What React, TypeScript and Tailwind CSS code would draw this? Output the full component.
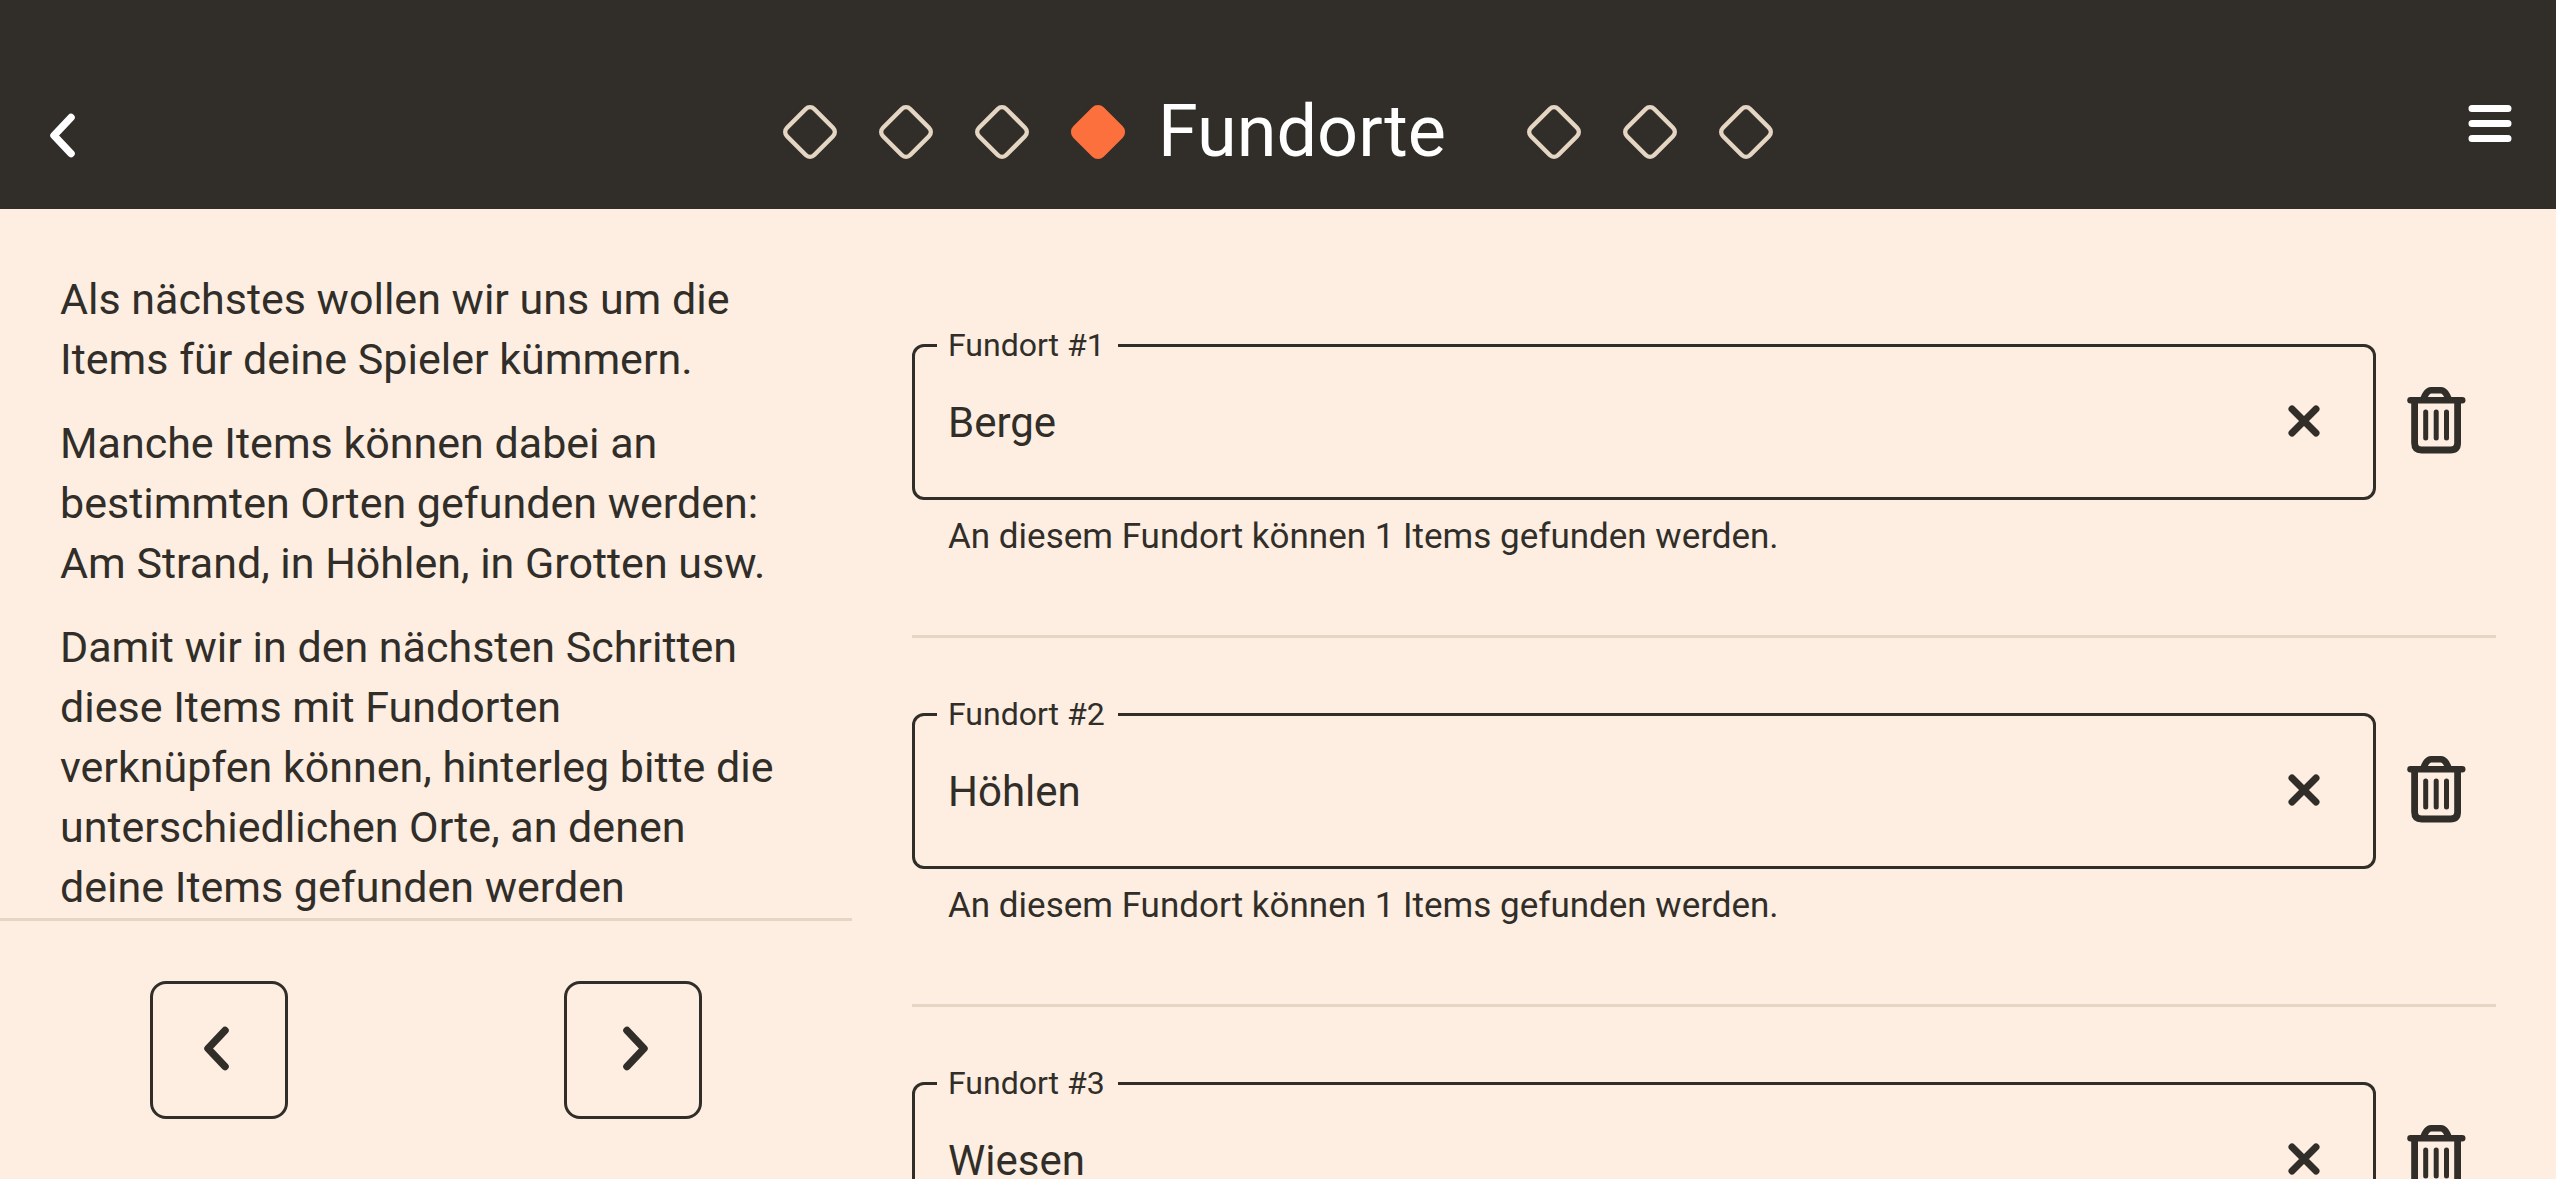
import React, { useState } from "react";

const STEPS_BEFORE = ["Schritt 1", "Schritt 2", "Schritt 3"];
const STEPS_AFTER = ["Schritt 5", "Schritt 6", "Schritt 7"];

const PARAGRAPHS = [
  "Als nächstes wollen wir uns um die Items für deine Spieler kümmern.",
  "Manche Items können dabei an bestimmten Orten gefunden werden: Am Strand, in Höhlen, in Grotten usw.",
  "Damit wir in den nächsten Schritten diese Items mit Fundorten verknüpfen können, hinterleg bitte die unterschiedlichen Orte, an denen deine Items gefunden werden",
];

function Diamond({ active = false }: { active?: boolean }) {
  return (
    <svg viewBox="0 0 60 60" className="size-[60px]" aria-hidden="true">
      {active ? (
        <rect x="8.5" y="8.5" width="43" height="43" rx="8" transform="rotate(45 30 30)" fill="#fc703e" />
      ) : (
        <rect
          x="10.75"
          y="10.75"
          width="38.5"
          height="38.5"
          rx="6"
          transform="rotate(45 30 30)"
          fill="none"
          stroke="#e5d5c3"
          strokeWidth="4.5"
        />
      )}
    </svg>
  );
}

function Step({ label, active }: { label: string; active?: boolean }) {
  return (
    <button type="button" aria-label={label} className="flex h-24 w-24 items-center justify-center">
      <Diamond active={active} />
    </button>
  );
}

function ChevronLeft() {
  return (
    <svg viewBox="0 0 72 72" className="size-[72px]" fill="none" stroke="currentColor" strokeWidth="7.5" strokeLinecap="round" strokeLinejoin="round" aria-hidden="true">
      <path d="M42 16.5 L25 34.5 L42 52.5" />
    </svg>
  );
}

function ChevronRight() {
  return (
    <svg viewBox="0 0 72 72" className="size-[72px]" fill="none" stroke="currentColor" strokeWidth="7.5" strokeLinecap="round" strokeLinejoin="round" aria-hidden="true">
      <path d="M30 16.5 L47 34.5 L30 52.5" />
    </svg>
  );
}

function MenuIcon() {
  return (
    <svg viewBox="0 0 48 48" className="size-12" stroke="currentColor" strokeWidth="7" strokeLinecap="round" aria-hidden="true">
      <path d="M6 9.5H42M6 24.5H42M6 39.5H42" />
    </svg>
  );
}

function CloseIcon() {
  return (
    <svg viewBox="0 0 48 48" className="size-12" stroke="currentColor" strokeWidth="7" strokeLinecap="round" aria-hidden="true">
      <path d="M12 11L36 35M36 11L12 35" />
    </svg>
  );
}

function TrashIcon() {
  return (
    <svg viewBox="0 0 72 72" className="size-[72px]" fill="none" stroke="currentColor" strokeLinecap="round" strokeLinejoin="round" aria-hidden="true">
      <path strokeWidth="6.5" d="M10.5 14.3H62.2" />
      <path strokeWidth="6.5" d="M23 13.5C25.5 8 27.5 4.2 31 4.2H41C44.500 4.2 46.5 8 49 13.5" />
      <path strokeWidth="6.8" d="M14.6 15V57Q14.6 64 21.6 64H50.4Q57.6 64 57.6 57V15" />
      <path strokeWidth="5" d="M25.7 26V52M36.2 26V52M46.5 26V52" />
    </svg>
  );
}

function LocationRow({ index, initial }: { index: number; initial: string }) {
  const [value, setValue] = useState(initial);
  const id = `fundort-${index}`;
  return (
    <li className="border-b-[3px] border-[#e5d5c3] pt-[75px] pb-[76px]">
      <div className="flex items-center">
        <div className="relative flex h-[156px] min-w-0 flex-1 items-center rounded-xl border-[3px] border-[#312e29] pr-[45px]">
          <label htmlFor={id} className="absolute -top-[22px] left-[22px] w-[181px] bg-[#fdeee1] pl-[11px] text-[32px] leading-10 whitespace-nowrap">
            Fundort #{index}
          </label>
          <input
            id={id}
            value={value}
            onChange={(e) => setValue(e.target.value)}
            className="h-full min-w-0 flex-1 bg-transparent pl-[33px] text-[42px] outline-none"
          />
          <button type="button" aria-label="Eingabe löschen" onClick={() => setValue("")}>
            <CloseIcon />
          </button>
        </div>
        <button type="button" aria-label={`Fundort #${index} entfernen`} className="flex w-[120px] items-center justify-center">
          <TrashIcon />
        </button>
      </div>
      <p className="mt-[14px] pl-9 text-[35px] leading-[45px]">An diesem Fundort können 1 Items gefunden werden.</p>
    </li>
  );
}

export default function App() {
  return (
    <div className="flex h-screen flex-col overflow-hidden bg-[#fdeee1] font-['Roboto',sans-serif] text-[#312e29]">
      <header className="grid shrink-0 grid-cols-[1fr_auto_1fr] items-center bg-[#312e29] pt-[84px] pb-[29px] text-white">
        <button type="button" aria-label="Zurück" className="mt-[10px] ml-[29px] justify-self-start">
          <ChevronLeft />
        </button>
        <nav aria-label="Schritte" className="flex items-center">
          {STEPS_BEFORE.map((s) => (
            <Step key={s} label={s} />
          ))}
          <Step label="Schritt 4" active />
          <h1 className="w-[360px] pl-3 text-[72px] leading-[96px]">Fundorte</h1>
          {STEPS_AFTER.map((s) => (
            <Step key={s} label={s} />
          ))}
        </nav>
        <button type="button" aria-label="Menü" className="mr-[42px] mb-[18px] justify-self-end">
          <MenuIcon />
        </button>
      </header>

      <div className="flex min-h-0 flex-1">
        <aside className="flex w-1/3 flex-col">
          <div className="min-h-0 flex-1 overflow-hidden pt-[60px] pr-[72px] pl-[60px]">
            <div className="flex flex-col gap-6 text-[43px] leading-[60px]">
              {PARAGRAPHS.map((p) => (
                <p key={p}>{p}</p>
              ))}
            </div>
          </div>
          <div className="flex justify-around border-t-[3px] border-[#e5d5c3] px-3 py-[60px]">
            <button type="button" aria-label="Vorheriger Schritt" className="flex size-[138px] items-center justify-center rounded-2xl border-[3px] border-[#312e29]">
              <ChevronLeft />
            </button>
            <button type="button" aria-label="Nächster Schritt" className="flex size-[138px] items-center justify-center rounded-2xl border-[3px] border-[#312e29]">
              <ChevronRight />
            </button>
          </div>
        </aside>

        <main className="min-w-0 flex-1 overflow-hidden px-[60px] pt-[60px]">
          <ul>
            <LocationRow index={1} initial="Berge" />
            <LocationRow index={2} initial="Höhlen" />
            <LocationRow index={3} initial="Wiesen" />
          </ul>
        </main>
      </div>
    </div>
  );
}
